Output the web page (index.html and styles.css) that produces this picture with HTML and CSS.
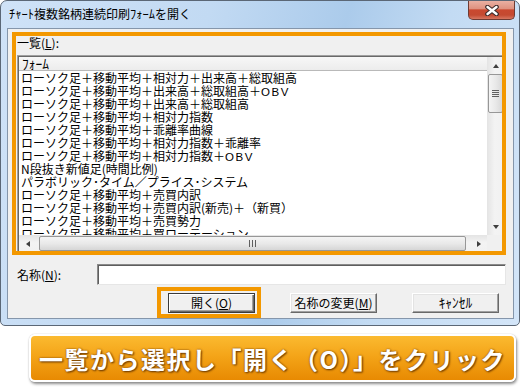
FILE: index.html
```html
<!DOCTYPE html>
<html lang="ja">
<head>
<meta charset="utf-8">
<title>ﾁｬｰﾄ複数銘柄連続印刷ﾌｫｰﾑを開く</title>
<link rel="stylesheet" href="styles.css">
</head>
<body>
<div class="window">
  <div class="titlebar">
    <span class="title"><span class="hw">ﾁｬｰﾄ</span>複数銘柄連続印刷<span class="hw">ﾌｫｰﾑ</span>を開く</span>
    <div class="close">
      <svg width="14" height="11" viewBox="0 0 14 11">
        <path d="M2.5 2 L11.5 9 M11.5 2 L2.5 9" stroke="#3b2b2b" stroke-width="4.6" stroke-linecap="round" fill="none"/>
        <path d="M2.5 2 L11.5 9 M11.5 2 L2.5 9" stroke="#ffffff" stroke-width="2.4" stroke-linecap="round" fill="none"/>
      </svg>
    </div>
  </div>
  <div class="client">
    <div class="label-list">一覧(<u>L</u>):</div>
    <div class="lv-outer">
      <div class="listview">
        <div class="lv-main">
          <div class="lv-header"><span class="hw">ﾌｫｰﾑ</span></div>
          <div class="lv-rows">
            <div class="row">ローソク足＋移動平均＋相対力＋出来高＋総取組高</div>
            <div class="row">ローソク足＋移動平均＋出来高＋総取組高＋<span class="lat">OBV</span></div>
            <div class="row">ローソク足＋移動平均＋出来高＋総取組高</div>
            <div class="row">ローソク足＋移動平均＋相対力指数</div>
            <div class="row">ローソク足＋移動平均＋乖離率曲線</div>
            <div class="row">ローソク足＋移動平均＋相対力指数＋乖離率</div>
            <div class="row">ローソク足＋移動平均＋相対力指数＋<span class="lat">OBV</span></div>
            <div class="row">N段抜き新値足(時間比例)</div>
            <div class="row">パラボリック･タイム／プライス･システム</div>
            <div class="row">ローソク足＋移動平均＋売買内訳</div>
            <div class="row">ローソク足＋移動平均＋売買内訳(新売)＋（新買）</div>
            <div class="row">ローソク足＋移動平均＋売買勢力</div>
            <div class="row">ローソク足＋移動平均＋買ローテーション</div>
          </div>
        </div>
        <div class="vscroll">
          <div class="sb-btn"><span class="tri-up"></span></div>
          <div class="thumb-v"><span class="grip-v"></span></div>
          <div class="track"></div>
          <div class="sb-btn"><span class="tri-down"></span></div>
        </div>
        <div class="hscroll">
          <div class="sb-btn-h"><span class="tri-left"></span></div>
          <div class="thumb-h"><span class="grip-h"></span></div>
          <div class="sb-btn-h"><span class="tri-right"></span></div>
        </div>
        <div class="corner"></div>
      </div>
    </div>
    <div class="name-row">
      <label class="name-label">名称(<u>N</u>):</label>
      <div class="input"></div>
    </div>
    <div class="btn-row">
      <div class="btn default">開く(<u>O</u>)</div>
      <div class="btn">名称の変更(<u>M</u>)</div>
      <div class="btn"><span class="hw">ｷｬﾝｾﾙ</span></div>
    </div>
  </div>
</div>
<div class="callout">一覧から選択し「開く（O）」をクリック</div>
<div class="hl hl-list"></div>
<div class="hl hl-btn"></div>
</body>
</html>
```

FILE: styles.css
```css
* { box-sizing: border-box; }
html, body { margin: 0; }
body {
  position: relative;
  width: 522px;
  height: 390px;
  background: #ffffff;
  font-family: "Noto Sans CJK JP", "Noto Sans", sans-serif;
  font-size: 12px;
  color: #000;
  overflow: hidden;
}
u { text-decoration: underline; text-underline-offset: 1px; }
.hw { font-size: 13.5px; line-height: 1; }
.title .hw { font-size: 12.5px; }
.lat { letter-spacing: 1.6px; font-family: "Liberation Sans", sans-serif; font-size: 11.5px; }

.window {
  width: 520px;
  height: 326px;
  border: 1px solid #5b6776;
  border-radius: 7px 7px 5px 5px;
  background: linear-gradient(105deg, #cfe2f7 0%, #c2daf3 35%, #abcbeb 58%, #c3dbf3 75%, #d3e5f8 100%);
  padding: 0 5px 6px 6px;
  display: flex;
  flex-direction: column;
}
.titlebar {
  height: 27px;
  display: flex;
  align-items: flex-start;
  flex: none;
}
.title {
  padding: 6px 0 0 2px;
  line-height: 14px;
  font-size: 12px;
  color: #000;
}
.close {
  margin-left: auto;
  margin-right: -1px;
  width: 47px;
  height: 19px;
  border: 1px solid #6e3b33;
  border-top: none;
  border-radius: 0 0 5px 5px;
  background: linear-gradient(#eab0a2 0%, #df9280 42%, #c9482f 50%, #c44a31 78%, #d77660 100%);
  display: flex;
  align-items: center;
  justify-content: center;
}

.client {
  flex: 1;
  border: 1px solid #8596ab;
  background: #f0f0f0;
  padding: 7px 7px 0 9px;
  display: flex;
  flex-direction: column;
}
.label-list {
  line-height: 14px;
  height: 14px;
}
.lv-outer {
  margin-top: 5px;
  height: 199px;
  border: 1px solid;
  border-color: #a0a0a0 #ffffff #ffffff #a0a0a0;
}
.listview {
  height: 100%;
  border: 1px solid;
  border-color: #696969 #e3e3e3 #e3e3e3 #696969;
  display: grid;
  grid-template-columns: 1fr 17px;
  grid-template-rows: 1fr 17px;
  background: #fff;
}
.lv-main {
  grid-row: 1;
  grid-column: 1;
  display: flex;
  flex-direction: column;
  overflow: hidden;
}
.lv-header {
  height: 14px;
  flex: none;
  background: linear-gradient(#f7f7f7, #ececec);
  border-bottom: 1px solid #b9b9b9;
  line-height: 13px;
  padding-left: 3px;
}
.lv-rows {
  flex: 1;
  overflow: hidden;
  padding-left: 2px;
}
.row {
  height: 13px;
  line-height: 13px;
  white-space: nowrap;
}

.vscroll {
  grid-row: 1;
  grid-column: 2;
  display: flex;
  flex-direction: column;
  background: linear-gradient(90deg, #e4e4e4, #f3f3f3 45%, #f1f1f1);
}
.sb-btn {
  height: 17px;
  flex: none;
  display: flex;
  align-items: center;
  justify-content: center;
}
.track { flex: 1; }
.thumb-v {
  height: 39px;
  flex: none;
  margin: 0 1px;
  border: 1px solid #979797;
  border-radius: 2px;
  background: linear-gradient(90deg, #f4f4f4, #e9e9e9 50%, #d9d9d9);
  display: flex;
  align-items: center;
  justify-content: center;
}
.grip-v {
  width: 7px;
  height: 7px;
  background: repeating-linear-gradient(#5f5f5f 0 1px, transparent 1px 2px);
}
.tri-up, .tri-down {
  width: 0; height: 0;
  border-left: 3.5px solid transparent;
  border-right: 3.5px solid transparent;
}
.tri-up { border-bottom: 4px solid #3f3f3f; }
.tri-down { border-top: 4px solid #3f3f3f; }

.hscroll {
  grid-row: 2;
  grid-column: 1;
  display: flex;
  background: linear-gradient(#e4e4e4, #f3f3f3 45%, #f1f1f1);
}
.sb-btn-h {
  width: 17px;
  flex: none;
  display: flex;
  align-items: center;
  justify-content: center;
}
.thumb-h {
  flex: 1;
  margin: 1px 4px 1px 3px;
  border: 1px solid #979797;
  border-radius: 2px;
  background: linear-gradient(#f4f4f4, #e9e9e9 50%, #d6d6d6);
  display: flex;
  align-items: center;
  justify-content: center;
}
.grip-h {
  width: 7px;
  height: 7px;
  background: repeating-linear-gradient(90deg, #5f5f5f 0 1px, transparent 1px 3px);
}
.tri-left, .tri-right {
  width: 0; height: 0;
  border-top: 3.5px solid transparent;
  border-bottom: 3.5px solid transparent;
}
.tri-left { border-right: 4px solid #3f3f3f; }
.tri-right { border-left: 4px solid #3f3f3f; }
.corner {
  grid-row: 2;
  grid-column: 2;
  background: #f0f0f0;
}

.name-row {
  margin-top: 10px;
  height: 21px;
  display: flex;
  align-items: center;
}
.name-label {
  width: 80px;
  flex: none;
  line-height: 14px;
}
.input {
  flex: 1;
  height: 21px;
  background: #fff;
  border: 1px solid;
  border-color: #8a8a8a #e6e6e6 #e6e6e6 #8a8a8a;
  box-shadow: inset 1px 1px 0 #5e5e5e;
}

.btn-row {
  margin-top: 8px;
  display: flex;
  justify-content: flex-end;
  gap: 35px;
  padding-right: 7px;
}
.btn {
  width: 87px;
  height: 20px;
  background: #f0f0f0;
  border: 1px solid;
  border-color: #ffffff #696969 #696969 #ffffff;
  box-shadow: inset -1px -1px 0 #a0a0a0, inset 1px 1px 0 #e3e3e3;
  display: flex;
  align-items: center;
  justify-content: center;
  line-height: 14px;
}
.btn.default {
  border-color: #3a3a3a;
  box-shadow: inset 1px 1px 0 #ffffff, inset -1px -1px 0 #696969, inset -2px -2px 0 #a0a0a0;
}

.callout {
  margin: 8px 0 0 29px;
  width: 487px;
  height: 48px;
  border: 2px solid #ffffff;
  border-radius: 6px;
  background: linear-gradient(#fbba30 0%, #f3a216 50%, #e88a02 100%);
  box-shadow: 1px 2px 3px rgba(0, 0, 0, 0.45), 0 0 1px rgba(0, 0, 0, 0.3);
  display: flex;
  align-items: center;
  justify-content: center;
  color: #ffffff;
  font-family: "Noto Sans CJK JP", sans-serif;
  font-weight: 700;
  font-size: 24px;
  letter-spacing: 1.5px;
  text-shadow: 0 0 2px #7a4300, 1px 1px 2px #6a3800;
  white-space: nowrap;
}

.hl {
  position: absolute;
  border: 4px solid #f39800;
}
.hl-list { left: 12px; top: 32px; width: 494px; height: 223px; }
.hl-btn { left: 157px; top: 287px; width: 104px; height: 31px; }
```
